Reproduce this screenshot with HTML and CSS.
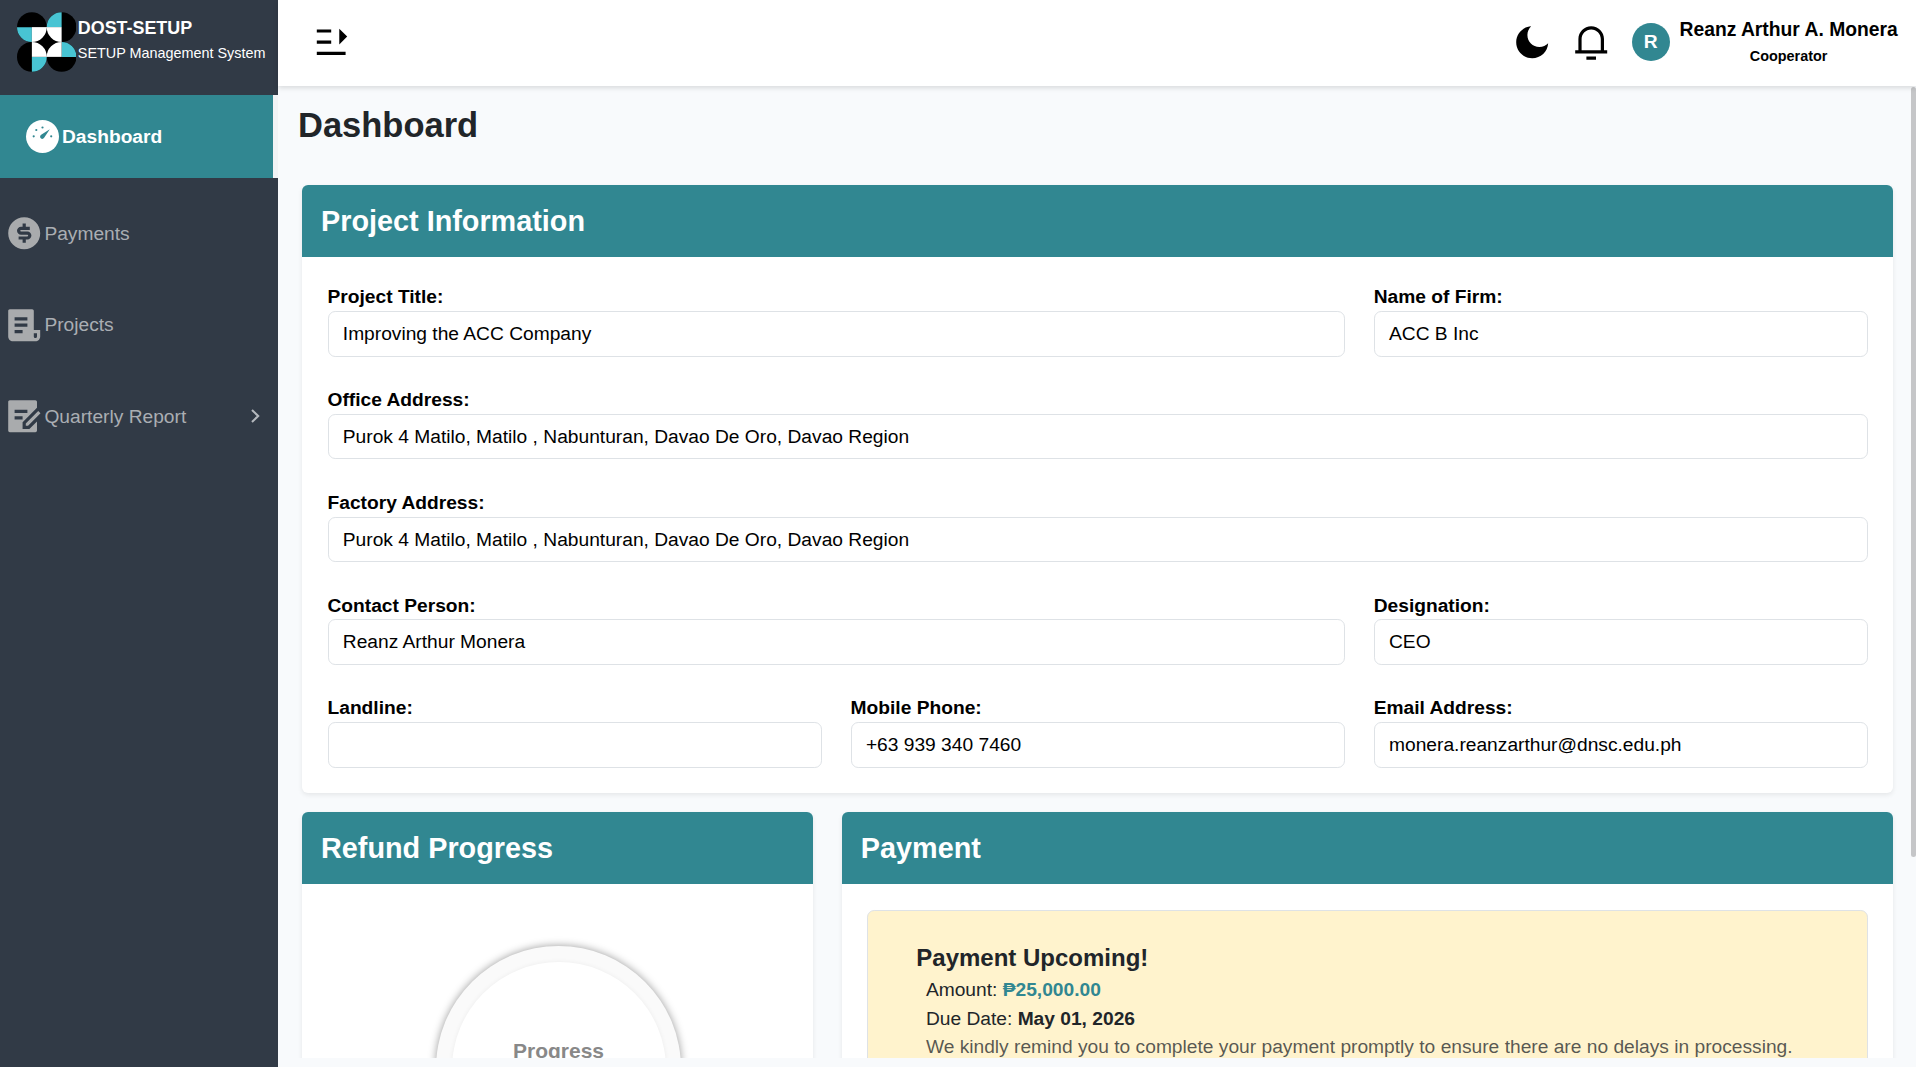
FILE: index.html
```html
<!DOCTYPE html>
<html lang="en">
<head>
<meta charset="utf-8">
<title>DOST-SETUP Dashboard</title>
<link rel="stylesheet" href="styles.css">
</head>
<body>
<div class="app">
  <aside class="sidebar">
    <div class="brand">
      <svg class="logo" viewBox="0 0 60 60">
        <g fill="#000"><circle cx="15" cy="15" r="15"/><circle cx="45" cy="15" r="15"/><circle cx="15" cy="45" r="15"/><circle cx="45" cy="45" r="15"/></g>
        <path fill="#48c4d3" d="M0 15A15 15 0 0 0 15 30V15ZM45 0A15 15 0 0 0 30 15H45ZM60 45A15 15 0 0 0 45 30V45ZM15 60A15 15 0 0 0 30 45H15Z"/>
        <path fill="#fff" d="M15 15H45V45H15Z"/>
        <path fill="#000" d="M30 15A15 15 0 0 0 45 30A15 15 0 0 0 30 45A15 15 0 0 0 15 30A15 15 0 0 0 30 15Z"/>
      </svg>
      <div class="brand-text"><strong>DOST-SETUP</strong><span>SETUP Management System</span></div>
    </div>
    <nav class="nav">
      <a class="nav-item active">
        <svg class="gauge" viewBox="0 0 33 33"><circle cx="16.5" cy="16.5" r="16.5" fill="#fff"/><g fill="#318791"><circle cx="7.7" cy="16.3" r="1.1"/><circle cx="10.3" cy="10" r="1.1"/><circle cx="16.5" cy="7.5" r="1.1"/><circle cx="25.2" cy="16.3" r="1.1"/><path d="M23.8 9.2L18.3 17.6A2.2 2.2 0 1 1 15.2 14.8Z"/></g></svg>
        <span>Dashboard</span>
      </a>
      <a class="nav-item">
        <svg class="icon" viewBox="0 0 24 24"><path d="M12.0049 22.0029C6.48204 22.0029 2.00488 17.5258 2.00488 12.0029C2.00488 6.48008 6.48204 2.00293 12.0049 2.00293C17.5277 2.00293 22.0049 6.48008 22.0049 12.0029C22.0049 17.5258 17.5277 22.0029 12.0049 22.0029ZM8.50488 14.0029V16.0029H11.0049V18.0029H13.0049V16.0029H14.0049C15.3856 16.0029 16.5049 14.8836 16.5049 13.5029C16.5049 12.1222 15.3856 11.0029 14.0049 11.0029H10.0049C9.72874 11.0029 9.50488 10.7791 9.50488 10.5029C9.50488 10.2268 9.72874 10.0029 10.0049 10.0029H15.5049V8.00293H13.0049V6.00293H11.0049V8.00293H10.0049C8.62417 8.00293 7.50488 9.12222 7.50488 10.5029C7.50488 11.8836 8.62417 13.0029 10.0049 13.0029H14.0049C14.281 13.0029 14.5049 13.2268 14.5049 13.5029C14.5049 13.7791 14.281 14.0029 14.0049 14.0029H8.50488Z"/></svg>
        <span>Payments</span>
      </a>
      <a class="nav-item">
        <svg class="icon" viewBox="0 0 24 24"><path d="M19 22H5C3.34315 22 2 20.6569 2 19V3C2 2.44772 2.44772 2 3 2H17C17.5523 2 18 2.44772 18 3V15H22V19C22 20.6569 20.6569 22 19 22ZM18 17V19C18 19.5523 18.4477 20 19 20C19.5523 20 20 19.5523 20 19V17H18ZM6 7V9H14V7H6ZM6 11V13H14V11H6ZM6 15V17H11V15H6Z"/></svg>
        <span>Projects</span>
      </a>
      <a class="nav-item">
        <svg class="icon" viewBox="1 0 24 24"><path d="M20 2C20.5523 2 21 2.44772 21 3V6.757L12.0012 15.7562L11.995 19.995L16.2414 20.0012L21 15.242V21C21 21.5523 20.5523 22 20 22H4C3.44772 22 3 21.5523 3 21V3C3 2.44772 3.44772 2 4 2H20ZM21.7782 8.80761L23.1924 10.2218L15.4142 18L13.9979 17.9979L14 16.5858L21.7782 8.80761ZM12 12H7V14H12V12ZM15 8H7V10H15V8Z"/></svg>
        <span>Quarterly Report</span>
        <svg class="chevron" viewBox="0 0 9 14"><path d="M1 1L7.2 7L1 13" fill="none" stroke="#b5b9be" stroke-width="2.1"/></svg>
      </a>
    </nav>
  </aside>
  <div class="page">
    <header class="topbar">
      <svg class="icon" viewBox="0 0 24 24"><path d="M3 4H12V6H3ZM3 11H12V13H3ZM3 18H21V20H3ZM17.05 3.55L22 8.5L17.05 13.45Z"/></svg>
      <div class="tools">
        <svg class="icon" viewBox="0 0 24 24"><path d="M11.3807 2.01886C9.91573 3.38768 9 5.3369 9 7.49999C9 11.6421 12.3579 15 16.5 15C18.6631 15 20.6123 14.0843 21.9811 12.6193C21.6613 17.8537 17.3149 22 12 22C6.47715 22 2 17.5228 2 12C2 6.68514 6.14629 2.33869 11.3807 2.01886Z"/></svg>
        <svg class="icon bell" viewBox="0 0 24 24"><path d="M20 17H22V19H2V17H4V10C4 5.58172 7.58172 2 12 2C16.4183 2 20 5.58172 20 10V17ZM18 17V10C18 6.68629 15.3137 4 12 4C8.68629 4 6 6.68629 6 10V17H18ZM9 21H15V23H9V21Z"/></svg>
        <div class="avatar">R</div>
        <div class="user"><strong>Reanz Arthur A. Monera</strong><small>Cooperator</small></div>
      </div>
    </header>
    <main class="content">
      <h1>Dashboard</h1>
      <section class="card">
        <h2>Project Information</h2>
        <div class="form">
          <div class="field wide"><label>Project Title:</label><div class="value">Improving the ACC Company</div></div>
          <div class="field"><label>Name of Firm:</label><div class="value">ACC B Inc</div></div>
          <div class="field full"><label>Office Address:</label><div class="value">Purok 4 Matilo, Matilo , Nabunturan, Davao De Oro, Davao Region</div></div>
          <div class="field full"><label>Factory Address:</label><div class="value">Purok 4 Matilo, Matilo , Nabunturan, Davao De Oro, Davao Region</div></div>
          <div class="field wide"><label>Contact Person:</label><div class="value">Reanz Arthur Monera</div></div>
          <div class="field"><label>Designation:</label><div class="value">CEO</div></div>
          <div class="field"><label>Landline:</label><div class="value"></div></div>
          <div class="field"><label>Mobile Phone:</label><div class="value">+63 939 340 7460</div></div>
          <div class="field"><label>Email Address:</label><div class="value">monera.reanzarthur@dnsc.edu.ph</div></div>
        </div>
      </section>
      <div class="panels">
        <section class="card">
          <h2>Refund Progress</h2>
          <div class="chart"><div class="ring"><div class="ring-inner">Progress</div></div></div>
        </section>
        <section class="card payment">
          <h2>Payment</h2>
          <div class="alert">
            <h3>Payment Upcoming!</h3>
            <p>Amount: <b class="amount">₱25,000.00</b></p>
            <p>Due Date: <b>May 01, 2026</b></p>
            <p class="note">We kindly remind you to complete your payment promptly to ensure there are no delays in processing.</p>
          </div>
        </section>
      </div>
      <div class="scroll-thumb"></div>
    </main>
  </div>
</div>
</body>
</html>
```
FILE: styles.css
```css
* { box-sizing: border-box; }
body {
  margin: 0;
  font: 19.2px/28.8px "Liberation Sans", Arial, sans-serif;
  color: #212529;
  background: #f8fafc;
}
h1, h2, h3, p { margin: 0; }
.app { display: flex; height: 1067px; overflow: hidden; }

/* Sidebar */
.sidebar { width: 278px; flex: none; background: #313a46; }
.brand { height: 95px; padding: 12px 0 0 16.5px; display: flex; gap: 1.8px; color: #fff; }
.logo { width: 59.5px; height: 60px; flex: none; }
.brand-text { display: flex; flex-direction: column; white-space: nowrap; padding-top: 3px; }
.brand-text strong { font-size: 17.9px; line-height: 26px; }
.brand-text span { font-size: 14.4px; line-height: 25px; }
.nav { display: flex; flex-direction: column; }
.nav-item {
  display: flex;
  align-items: center;
  height: 83px;
  margin-bottom: 8.4px;
  padding-left: 5px;
  color: #aaaeb3;
}
.nav-item span { padding-top: 1px; }
.nav-item.active {
  background: #318791;
  color: #fff;
  font-weight: 700;
  padding-left: 26px;
  margin-bottom: 14.2px;
  border-right: 5px solid #f1f3f5;
}
.icon { width: 38.4px; height: 38.4px; flex: none; fill: currentColor; }
.nav-item .icon { fill: #a9abad; margin-right: 1px; }
.gauge { width: 33px; height: 33px; margin-right: 3px; }
.chevron { width: 9px; height: 14px; margin: 0 18px 0 auto; }

/* Top bar */
.page { flex: 1; min-width: 0; display: flex; flex-direction: column; padding-bottom: 9px; }
.topbar {
  position: relative;
  z-index: 1;
  height: 86px;
  flex: none;
  display: flex;
  align-items: center;
  justify-content: space-between;
  padding: 0 18.3px 2px 34px;
  color: #000;
  background: #fff;
  box-shadow: 0 2px 5px rgba(0, 0, 0, .13);
}
.tools { display: flex; align-items: center; }
.bell { margin-left: 21px; margin-right: 21px; }
.avatar {
  width: 38.4px;
  height: 38.4px;
  border-radius: 50%;
  background: #318791;
  color: #fff;
  font-weight: 700;
  line-height: 38px;
  text-align: center;
}
.user { display: flex; flex-direction: column; align-items: center; margin-left: 9.6px; padding-top: 1.5px; }
.user strong { font-size: 19.3px; line-height: 26px; }
.user small { font-size: 14.4px; line-height: 26.5px; font-weight: 700; }

/* Content */
.content { position: relative; flex: 1; min-height: 0; overflow: hidden; padding: 19px 23.4px 0 24px; }
h1 { font-size: 34.5px; line-height: 41px; margin: 0 0 39px -4px; }
.card {
  background: #fff;
  border-radius: 6px;
  box-shadow: 0 2px 5px rgba(0, 0, 0, .08);
}
.card h2 {
  height: 72px;
  padding: 0 19px;
  border-radius: 6px 6px 0 0;
  background: #318791;
  color: #fff;
  font-size: 28.8px;
  line-height: 72px;
}
.form {
  display: grid;
  grid-template-columns: repeat(3, 1fr);
  gap: 28.4px 28.8px;
  padding: 25.3px 24.6px 25px 25.5px;
}
.field { color: #000; }
.wide { grid-column: span 2; }
.full { grid-column: span 3; }
.field label { display: block; height: 28.8px; line-height: 30px; font-weight: 700; }
.value {
  height: 45.6px;
  padding: 0 14.3px;
  border: 1px solid #dee2e6;
  border-radius: 7.2px;
  line-height: 43.6px;
}
.panels {
  display: grid;
  grid-template-columns: repeat(3, 1fr);
  gap: 28.8px;
  margin-top: 19.2px;
}
.payment { grid-column: span 2; padding-bottom: 25px; }
.chart { height: 420px; padding: 62px 0 0 2px; display: flex; justify-content: center; }
.ring {
  width: 245px;
  height: 245px;
  border-radius: 50%;
  padding: 15.5px;
  background: #fafafa;
  box-shadow: 0 0 9px rgba(0, 0, 0, .4);
}
.ring-inner {
  height: 100%;
  border-radius: 50%;
  background: #fff;
  box-shadow: 0 0 5px rgba(0, 0, 0, .06);
  color: #888;
  font-size: 21px;
  font-weight: 700;
  text-align: center;
  padding-top: 75.5px;
}
.alert {
  margin: 26px 25px 0;
  height: 300px;
  padding: 30px 48.5px;
  border: 1px solid #dee2e6;
  border-radius: 7.2px;
  background: #fff3cd;
}
.alert h3 { font-size: 24px; line-height: 34px; margin-bottom: .6px; }
.alert p { padding-left: 9.6px; line-height: 28.9px; white-space: nowrap; }
.amount { color: #318791; }
.alert .note { color: rgba(33, 37, 41, .75); }
.scroll-thumb {
  position: absolute;
  top: 1px;
  right: 0;
  width: 5px;
  height: 770px;
  border-radius: 3px;
  background: #c5c6c8;
}
```
